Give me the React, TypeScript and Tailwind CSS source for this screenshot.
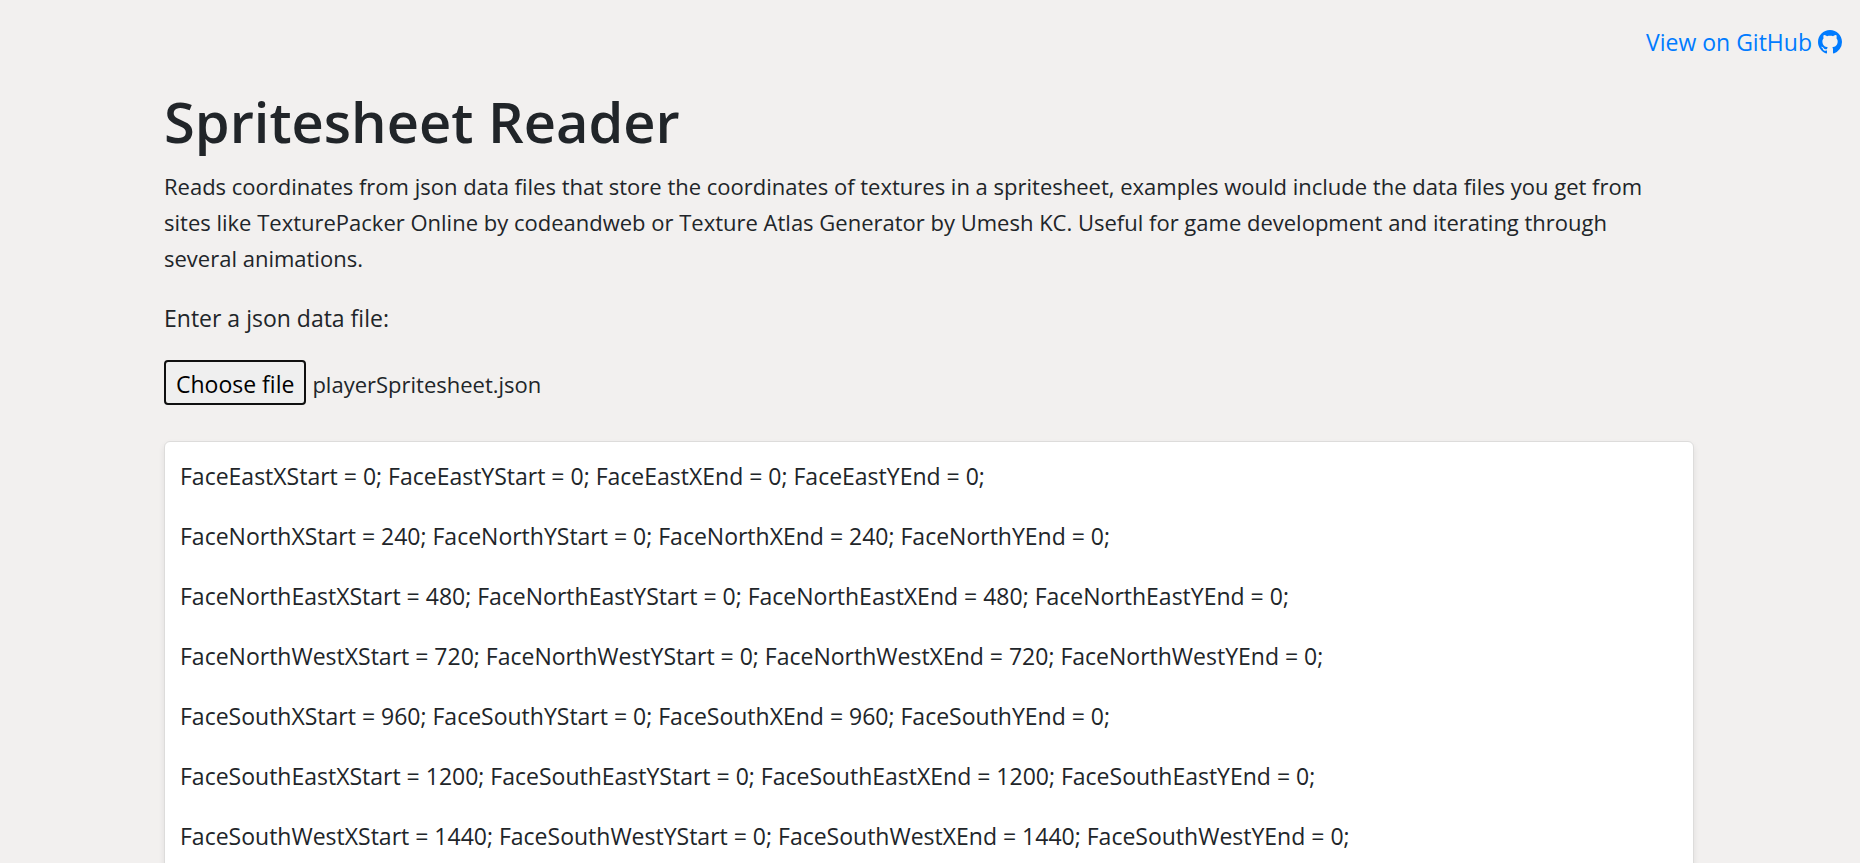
import { useRef, useState } from "react";

const frames = [
  { name: "FaceEast", x: 0, y: 0 },
  { name: "FaceNorth", x: 240, y: 0 },
  { name: "FaceNorthEast", x: 480, y: 0 },
  { name: "FaceNorthWest", x: 720, y: 0 },
  { name: "FaceSouth", x: 960, y: 0 },
  { name: "FaceSouthEast", x: 1200, y: 0 },
  { name: "FaceSouthWest", x: 1440, y: 0 },
];

function GitHubMark() {
  return (
    <svg viewBox="0 0 16 16" className="size-6 fill-current" aria-hidden="true">
      <path d="M8 0C3.58 0 0 3.58 0 8c0 3.54 2.29 6.53 5.47 7.59.4.07.55-.17.55-.38 0-.19-.01-.82-.01-1.49-2.01.37-2.53-.49-2.69-.94-.09-.23-.48-.94-.82-1.13-.28-.15-.68-.52-.01-.53.63-.01 1.08.58 1.23.82.72 1.21 1.87.87 2.33.66.07-.52.28-.87.51-1.07-1.78-.2-3.64-.89-3.64-3.95 0-.87.31-1.59.82-2.15-.08-.2-.36-1.02.08-2.12 0 0 .67-.21 2.2.82.64-.18 1.32-.27 2-.27s1.36.09 2 .27c1.53-1.04 2.2-.82 2.2-.82.44 1.1.16 1.92.08 2.12.51.56.82 1.27.82 2.15 0 3.07-1.87 3.75-3.65 3.95.29.25.54.73.54 1.48 0 1.07-.01 1.93-.01 2.2 0 .21.15.46.55.38A8.01 8.01 0 0 0 16 8c0-4.42-3.58-8-8-8" />
    </svg>
  );
}

export default function App() {
  const input = useRef<HTMLInputElement>(null);
  const [fileName, setFileName] = useState("playerSpritesheet.json");

  return (
    <div className="min-h-screen bg-[#f2f0ef] pb-6 font-['Open_Sans','Noto_Sans',sans-serif] text-[23px] leading-9 text-[#212529]">
      <header className="flex justify-end pt-6 pr-[18px]">
        <a href="https://github.com" className="flex items-center gap-1.5 text-[#007bff] hover:underline">
          View on GitHub
          <GitHubMark />
        </a>
      </header>

      <main className="pt-6 pr-[166px] pl-41">
        <h1 className="mb-2.5 text-[56px] leading-[74px] font-semibold">Spritesheet Reader</h1>
        <p className="mb-6 pr-4 text-[22px] leading-9">
          Reads coordinates from json data files that store the coordinates of textures in a spritesheet, examples would
          include the data files you get from sites like TexturePacker Online by codeandweb or Texture Atlas Generator by
          Umesh KC. Useful for game development and iterating through several animations.
        </p>
        <label htmlFor="data-file" className="mb-6 block">
          Enter a json data file:
        </label>
        <div className="mb-9 flex items-baseline gap-1.5">
          <button
            type="button"
            onClick={() => input.current?.click()}
            className="rounded-sm border-2 border-[#101010] bg-[#efefef] px-2.5 pt-1 pb-px text-black"
          >
            Choose file
          </button>
          <span className="text-[22px] leading-9">{fileName}</span>
          <input
            ref={input}
            id="data-file"
            type="file"
            accept=".json"
            className="hidden"
            onChange={(e) => setFileName(e.target.files?.[0]?.name ?? fileName)}
          />
        </div>

        <section className="flex flex-col gap-6 rounded-md border border-[#dddcdb] bg-white px-[15px] py-4 shadow-[0_3px_6px_rgba(0,0,0,0.075)]">
          {frames.map(({ name, x, y }) => (
            <p key={name}>
              {`${name}XStart = ${x}; ${name}YStart = ${y}; ${name}XEnd = ${x}; ${name}YEnd = ${y};`}
            </p>
          ))}
        </section>
      </main>
    </div>
  );
}
